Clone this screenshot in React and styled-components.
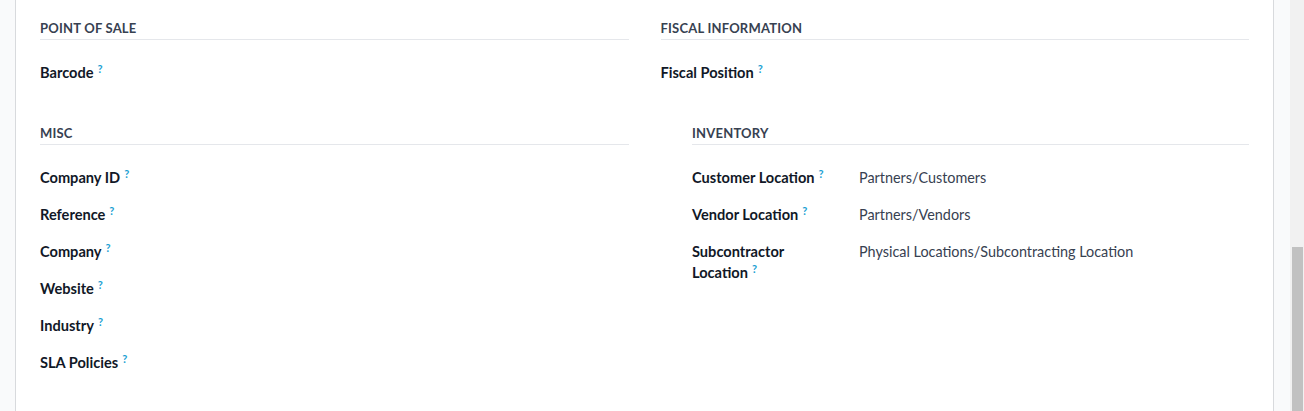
import styled, { createGlobalStyle } from 'styled-components';

const GlobalStyle = createGlobalStyle`
    html, body {
        margin: 0;
        padding: 0;
        background: #f9fafb;
        font-family: Lato, "Open Sans", sans-serif;
        font-size: 14px;
        color: #111827;
        overflow: hidden;
    }
`;

const Page = styled.div`
    display: flex;
    height: 411px;
    overflow: hidden;
`;

const Gutter = styled.div`
    flex: 0 0 ${({ width }) => width}px;
    background: #f9fafb;
`;

const Sheet = styled.div`
    flex: 1 1 auto;
    background: #fff;
    border-left: 1px solid #d8dadd;
    border-right: 1px solid #d8dadd;
    padding: 0 24px;
`;

const Scrollbar = styled.div`
    position: relative;
    flex: 0 0 14px;
    background: #f1f1f1;
`;

const Thumb = styled.div`
    position: absolute;
    left: 2px;
    right: 1px;
    top: 247px;
    bottom: 0;
    background: #c1c1c1;
`;

const Row = styled.div`
    display: grid;
    grid-template-columns: 1fr 1fr;
    column-gap: 32px;
    margin: 0 0 22px 0;
`;

const Group = styled.div`
    display: flex;
    flex-direction: column;
    padding-left: ${({ indent }) => indent || 0}px;
`;

const Heading = styled.h3`
    margin: 18px 0 22px 0;
    padding: 0 0 1px 0;
    font-size: 13px;
    line-height: 20px;
    font-weight: 700;
    text-transform: uppercase;
    color: #374151;
    border-bottom: 1px solid #e5e7eb;
    letter-spacing: 0.2px;
`;

const Field = styled.div`
    display: flex;
    margin: 0 0 16px 0;
    line-height: 21px;
    &:last-child {
        margin: 0;
    }
`;

const Label = styled.div`
    flex: 0 0 167px;
    padding-right: 16px;
    box-sizing: border-box;
    font-size: 14.6px;
    font-weight: 700;
    color: #111827;
`;

const Help = styled.sup`
    margin-left: 4px;
    font-size: 11px;
    font-weight: 700;
    color: #1c9fd3;
    vertical-align: 5px;
    line-height: 0;
`;

const Value = styled.div`
    flex: 1 1 auto;
    font-size: 14.4px;
    color: #374151;
`;

const FormField = ({ label, value }) => (
    <Field>
        <Label>
            {label}<Help>?</Help>
        </Label>
        {value && <Value>{value}</Value>}
    </Field>
);

const misc = ['Company ID', 'Reference', 'Company', 'Website', 'Industry', 'SLA Policies'];

const inventory = [
    ['Customer Location', 'Partners/Customers'],
    ['Vendor Location', 'Partners/Vendors'],
    ['Subcontractor Location', 'Physical Locations/Subcontracting Location']
];

const App = () => (
    <>
        <GlobalStyle />
        <Page>
            <Gutter width={15} />
            <Sheet>
                <Row>
                    <Group>
                        <Heading>Point of Sale</Heading>
                        <FormField label="Barcode" />
                    </Group>
                    <Group>
                        <Heading>Fiscal Information</Heading>
                        <FormField label="Fiscal Position" />
                    </Group>
                </Row>
                <Row>
                    <Group>
                        <Heading>Misc</Heading>
                        {misc.map(label => <FormField key={label} label={label} />)}
                    </Group>
                    <Group indent={31.5}>
                        <Heading>Inventory</Heading>
                        {inventory.map(([label, value]) => (
                            <FormField key={label} label={label} value={value} />
                        ))}
                    </Group>
                </Row>
            </Sheet>
            <Gutter width={16} />
            <Scrollbar>
                <Thumb />
            </Scrollbar>
        </Page>
    </>
);

export default App;
